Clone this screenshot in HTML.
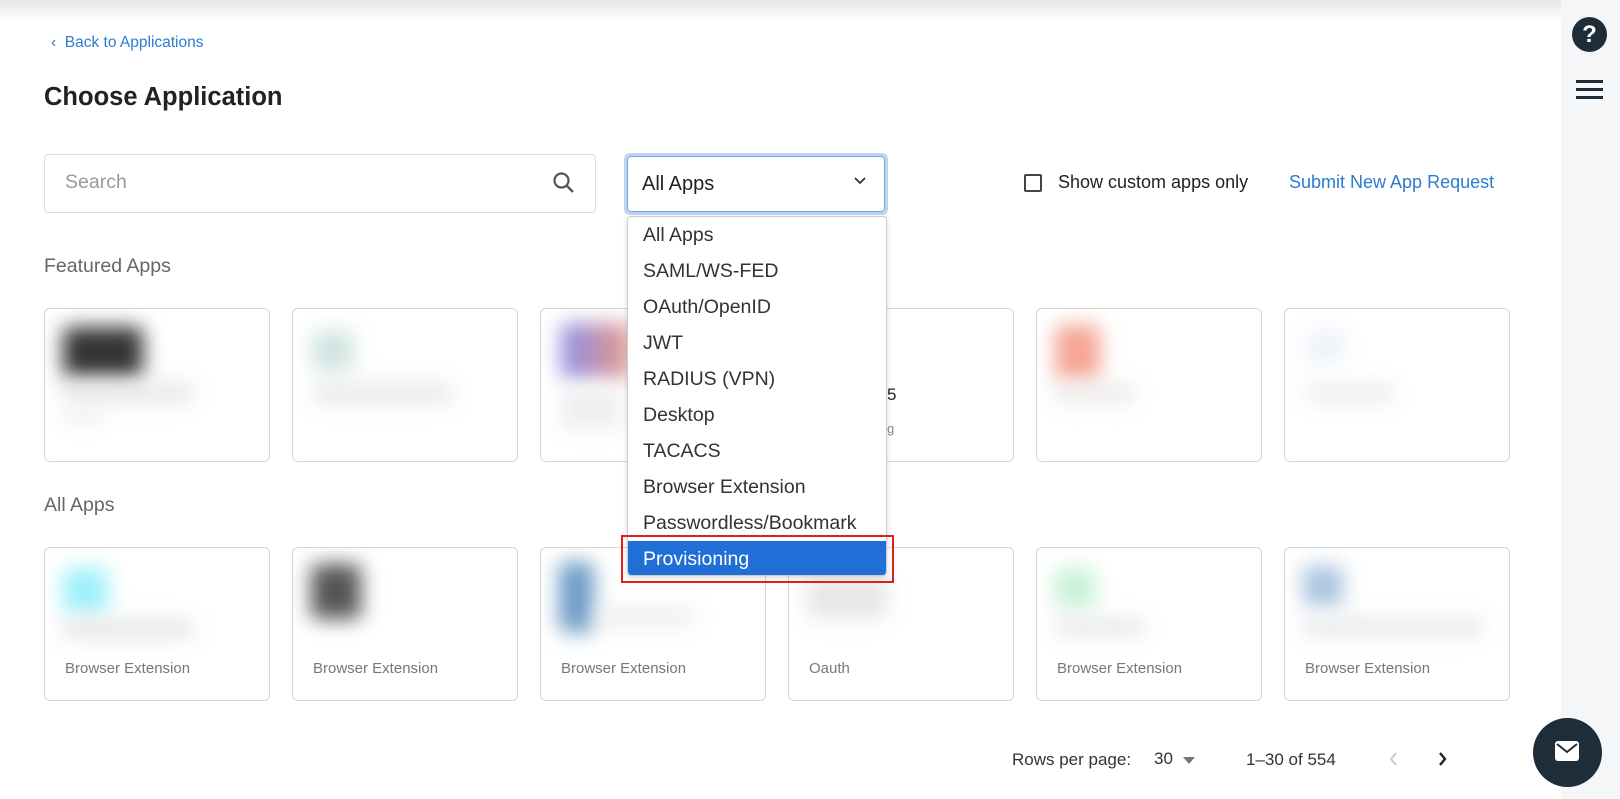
<!DOCTYPE html>
<html><head><meta charset="utf-8"><style>
*{box-sizing:border-box;margin:0;padding:0}
body{width:1620px;height:799px;overflow:hidden;background:#fff;font-family:"Liberation Sans",sans-serif;position:relative;color:#222}
.abs{position:absolute}
.topsh{left:0;top:0;width:1620px;height:22px;background:linear-gradient(#e6e6e6,#fff)}
.side{left:1561px;top:0;width:59px;height:799px;background:#f4f6f8}
.card{position:absolute;width:226px;height:154px;border:1px solid #d6d6d6;border-radius:6px;background:#fff;overflow:hidden}
.bl{position:absolute;filter:blur(10px);border-radius:6px}
.sub{position:absolute;left:20px;top:112px;font-size:15px;color:#777}
.menu div{height:36px;line-height:36px;padding-left:15px;font-size:19.5px;color:#333}
</style></head><body>
<div class="abs topsh"></div>
<div class="abs side"></div>
<div class="abs" style="left:1572px;top:17px;width:35px;height:35px;border-radius:50%;background:#1f2d3a;color:#fff;font-weight:bold;font-size:24px;text-align:center;line-height:35px">?</div>
<div class="abs" style="left:1576px;top:80px;width:27px;height:3px;background:#1f2d3a"></div>
<div class="abs" style="left:1576px;top:88px;width:27px;height:3px;background:#1f2d3a"></div>
<div class="abs" style="left:1576px;top:96px;width:27px;height:3px;background:#1f2d3a"></div>

<div class="abs" style="left:51px;top:34px;font-size:15.5px;color:#2e7bcf">‹&nbsp;&nbsp;Back to Applications</div>
<div class="abs" style="left:44px;top:83px;font-size:25.5px;font-weight:bold;color:#222">Choose Application</div>

<div class="abs" style="left:44px;top:154px;width:552px;height:59px;border:1px solid #ddd;border-radius:4px"></div>
<div class="abs" style="left:65px;top:171px;font-size:19.5px;color:#999">Search</div>
<svg class="abs" style="left:552px;top:171px" width="24" height="24" viewBox="0 0 24 24"><circle cx="9.5" cy="9.5" r="7" fill="none" stroke="#555" stroke-width="2.2"/><path d="M14.5 14.5L21 21" stroke="#555" stroke-width="2.4"/></svg>

<div class="abs" style="left:624px;top:153px;width:264px;height:62px;border:3px solid #bcd3f5;border-radius:6px"></div>
<div class="abs" style="left:627px;top:156px;width:258px;height:56px;border:1px solid #7aa0d8;border-radius:4px;background:#fff"></div>
<div class="abs" style="left:642px;top:173px;font-size:20px;color:#222">All Apps</div>
<svg class="abs" style="left:853px;top:176px" width="14" height="10" viewBox="0 0 14 10"><path d="M2 2l5 5 5-5" fill="none" stroke="#333" stroke-width="1.8"/></svg>

<div class="abs" style="left:1024px;top:174px;width:18px;height:18px;border:2px solid #444;border-radius:2px"></div>
<div class="abs" style="left:1058px;top:172px;font-size:18px;color:#222">Show custom apps only</div>
<div class="abs" style="left:1289px;top:172px;font-size:18px;color:#2e7bcf">Submit New App Request</div>

<div class="abs" style="left:44px;top:255px;font-size:19.5px;color:#666">Featured Apps</div>
<div class="abs" style="left:44px;top:494px;font-size:19.5px;color:#666">All Apps</div>

<!-- row1 -->
<div class="card" style="left:44px;top:308px"><div class="bl" style="left:18px;top:18px;width:80px;height:50px;background:#333"></div><div class="bl" style="left:18px;top:75px;width:130px;height:18px;background:#e4e4e4"></div><div class="bl" style="left:18px;top:100px;width:40px;height:14px;background:#eee"></div></div>
<div class="card" style="left:292px;top:308px"><div class="bl" style="left:20px;top:22px;width:40px;height:40px;background:#cfe3e0"></div><div class="bl" style="left:20px;top:75px;width:140px;height:18px;background:#e6e6e6"></div></div>
<div class="card" style="left:540px;top:308px"><div class="bl" style="left:20px;top:14px;width:70px;height:55px;background:linear-gradient(90deg,#8a8ee8,#e79a8a)"></div><div class="bl" style="left:20px;top:80px;width:60px;height:40px;background:#eee"></div></div>
<div class="card" style="left:788px;top:308px"><div style="position:absolute;left:98px;top:76px;font-size:17px">5</div><div style="position:absolute;left:98px;top:112px;font-size:13px;color:#888">g</div></div>
<div class="card" style="left:1036px;top:308px"><div class="bl" style="left:18px;top:16px;width:45px;height:55px;background:#f5a594"></div><div class="bl" style="left:18px;top:75px;width:80px;height:18px;background:#eaeaea"></div></div>
<div class="card" style="left:1284px;top:308px"><div class="bl" style="left:20px;top:20px;width:40px;height:35px;background:#eef3f9"></div><div class="bl" style="left:20px;top:75px;width:90px;height:18px;background:#ececec"></div></div>
<!-- row2 -->
<div class="card" style="left:44px;top:547px"><div class="bl" style="left:18px;top:20px;width:45px;height:45px;background:#9ef0fb"></div><div class="bl" style="left:18px;top:72px;width:130px;height:18px;background:#e4e4e4"></div><div class="sub">Browser Extension</div></div>
<div class="card" style="left:292px;top:547px"><div class="bl" style="left:18px;top:16px;width:50px;height:55px;background:#555"></div><div class="sub">Browser Extension</div></div>
<div class="card" style="left:540px;top:547px"><div class="bl" style="left:18px;top:14px;width:35px;height:70px;background:#6d9bc7"></div><div class="bl" style="left:55px;top:60px;width:100px;height:18px;background:#eee"></div><div class="sub">Browser Extension</div></div>
<div class="card" style="left:788px;top:547px"><div class="bl" style="left:18px;top:30px;width:80px;height:40px;background:#e6e6e6"></div><div class="sub">Oauth</div></div>
<div class="card" style="left:1036px;top:547px"><div class="bl" style="left:18px;top:20px;width:40px;height:40px;background:#c6f1d6"></div><div class="bl" style="left:18px;top:70px;width:90px;height:18px;background:#e8e8e8"></div><div class="sub">Browser Extension</div></div>
<div class="card" style="left:1284px;top:547px"><div class="bl" style="left:18px;top:18px;width:40px;height:40px;background:#a9c4df"></div><div class="bl" style="left:18px;top:70px;width:180px;height:18px;background:#e8e8e8"></div><div class="sub">Browser Extension</div></div>

<!-- dropdown menu -->
<div class="abs menu" style="left:627px;top:216px;width:260px;height:360px;border:1px solid #ccc;border-radius:4px;background:#fff;box-shadow:0 2px 6px rgba(0,0,0,.15);overflow:hidden">
<div>All Apps</div><div>SAML/WS-FED</div><div>OAuth/OpenID</div><div>JWT</div><div>RADIUS (VPN)</div><div>Desktop</div><div>TACACS</div><div>Browser Extension</div><div>Passwordless/Bookmark</div>
<div style="background:#1f6fd6;color:#fff;border-radius:0 0 6px 6px">Provisioning</div>
</div>
<div class="abs" style="left:621px;top:535px;width:273px;height:48px;border:2px solid #e01f1f"></div>

<!-- pagination -->
<div class="abs" style="left:1012px;top:750px;font-size:17px;color:#333">Rows per page:</div>
<div class="abs" style="left:1154px;top:749px;font-size:17px;color:#333">30</div>
<svg class="abs" style="left:1183px;top:757px" width="12" height="7"><path d="M0 0h12L6 7z" fill="#777"/></svg>
<div class="abs" style="left:1246px;top:750px;font-size:17px;color:#333">1–30 of 554</div>
<svg class="abs" style="left:1388px;top:751px" width="10" height="16"><path d="M8 2L3 8l5 6" fill="none" stroke="#ccc" stroke-width="2"/></svg>
<svg class="abs" style="left:1438px;top:751px" width="10" height="16"><path d="M2 2l5 6-5 6" fill="none" stroke="#222" stroke-width="2.4"/></svg>

<div class="abs" style="left:1533px;top:718px;width:69px;height:69px;border-radius:50%;background:#1f2d3a"></div>
<svg class="abs" style="left:1554px;top:739px" width="26" height="24" viewBox="0 0 26 24"><rect x="1" y="2" width="24" height="20" rx="3" fill="#fff"/><path d="M3 5l10 8 10-8" fill="none" stroke="#1f2d3a" stroke-width="2"/></svg>
</body></html>
